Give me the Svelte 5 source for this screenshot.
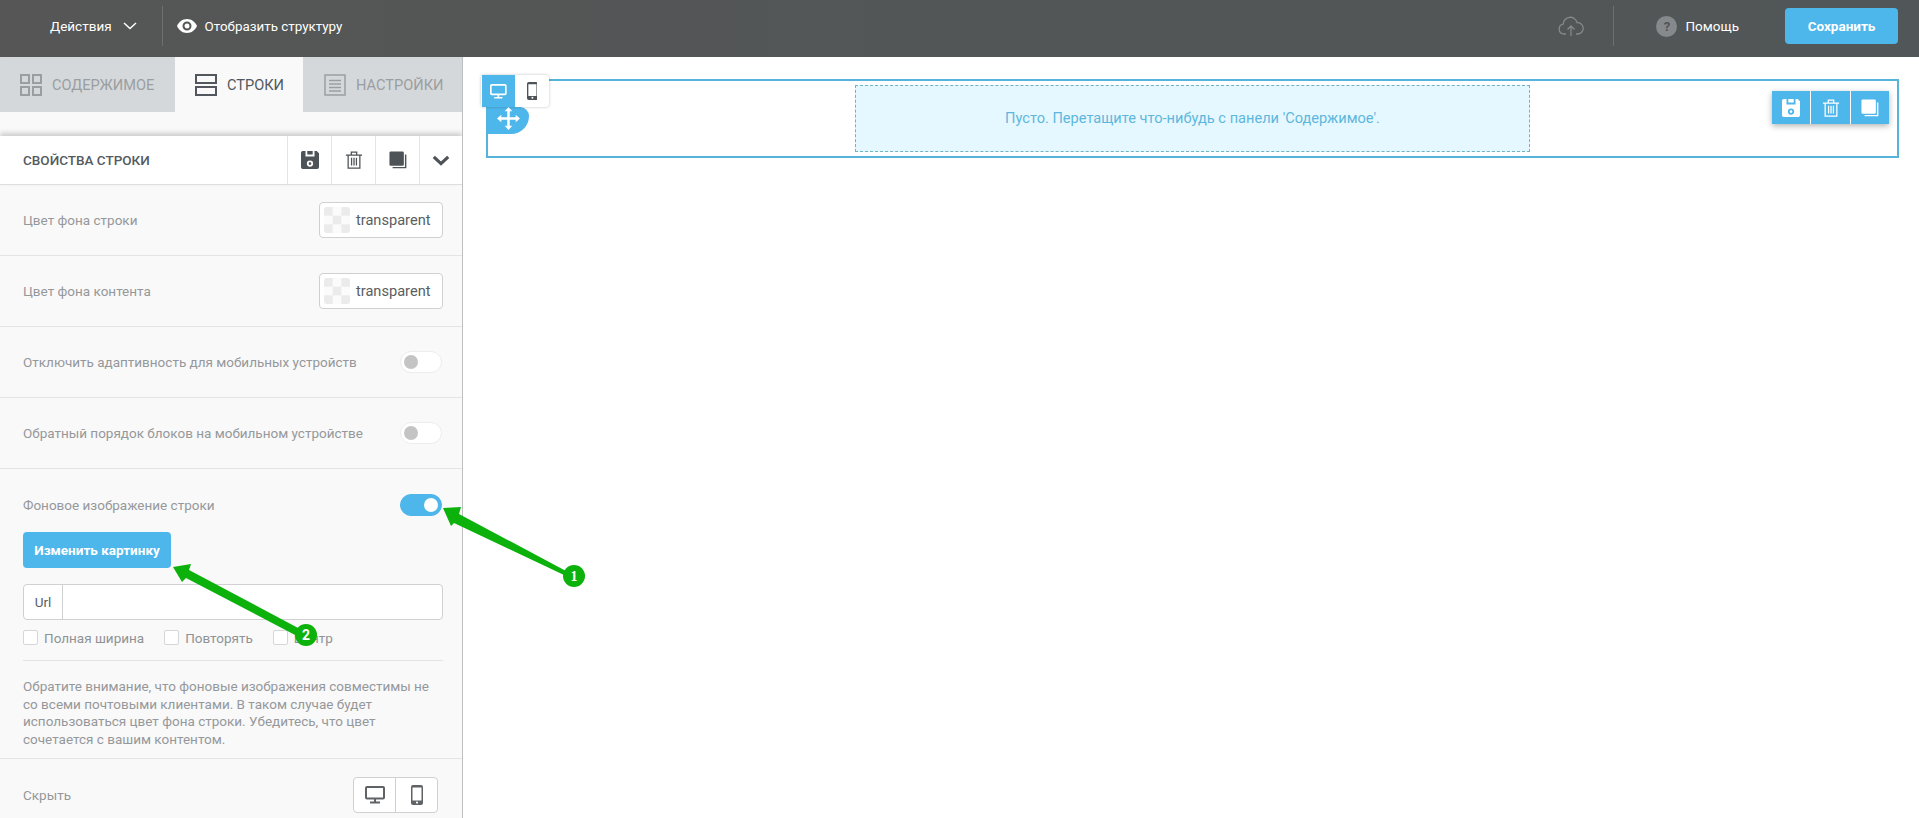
<script>
  const switchRows = [
    'Отключить адаптивность для мобильных устройств',
    'Обратный порядок блоков на мобильном устройстве'
  ];
  const colorRows = ['Цвет фона строки', 'Цвет фона контента'];
  const checks = ['Полная ширина', 'Повторять', 'Центр'];
</script>

{#snippet floppy()}
  <svg viewBox="0 0 20 20" width="18" height="18"><path fill="currentColor" fill-rule="evenodd" d="M2 0h3v6h10V0h2.500L20 2.500V18a2 2 0 0 1-2 2H2a2 2 0 0 1-2-2V2a2 2 0 0 1 2-2zM7 0h6v4H7zM10 10.500a3.500 3.500 0 1 0 0 7 3.500 3.500 0 0 0 0-7zm0 2a1.500 1.500 0 1 1 0 3 1.500 1.500 0 0 1 0-3z"/></svg>
{/snippet}

{#snippet trash()}
  <svg viewBox="0 0 20 20" width="18" height="18" fill="none" stroke="currentColor" stroke-width="1.400"><path d="M1 4.500h18M7 4V1.200h6V4M3.500 4.700V19h13V4.700M7.300 7.500v8.500M10 7.500v8.500M12.700 7.500v8.500"/></svg>
{/snippet}

{#snippet copy()}
  <svg viewBox="0 0 20 20" width="18" height="18"><rect x="0.500" y="0.500" width="16" height="16" rx="1.500" fill="currentColor"/><path d="M18.500 4v14.500H4" fill="none" stroke="currentColor" stroke-width="1.600"/></svg>
{/snippet}

{#snippet monitor()}
  <svg viewBox="0 0 20 18" width="20" height="18" fill="none" stroke="currentColor" stroke-width="2"><rect x="1" y="1" width="18" height="11.500" rx="1"/><path d="M10 13v3M5 16.500h10"/></svg>
{/snippet}

{#snippet phone()}
  <svg viewBox="0 0 12 20" width="12" height="20"><path fill="currentColor" fill-rule="evenodd" d="M2 0h8a2 2 0 0 1 2 2v16a2 2 0 0 1-2 2H2a2 2 0 0 1-2-2V2a2 2 0 0 1 2-2zM1.500 2.500v13h9v-13zM6 16.500a1.100 1.100 0 1 0 0 2.200 1.100 1.100 0 0 0 0-2.200z"/></svg>
{/snippet}

<div class="page">
  <header class="topbar">
    <div class="actions">
      <span>Действия</span>
      <svg viewBox="0 0 14 8" width="14" height="8" fill="none" stroke="currentColor" stroke-width="1.500"><path d="M1 1l6 5.500L13 1"/></svg>
    </div>
    <div class="structure">
      <svg viewBox="0 0 20 14" width="20" height="14"><path fill="currentColor" fill-rule="evenodd" d="M10 0c4.500 0 8.200 2.800 10 7-1.800 4.200-5.500 7-10 7S1.800 11.200 0 7c1.800-4.200 5.500-7 10-7zm0 2.500a4.500 4.500 0 1 0 0 9 4.500 4.500 0 0 0 0-9zm0 2a2.500 2.500 0 1 1 0 5 2.500 2.500 0 0 1 0-5z"/></svg>
      <span>Отобразить структуру</span>
    </div>
    <div class="top-right">
      <svg class="cloud" viewBox="0 0 27 21" width="27" height="21" fill="none" stroke="currentColor" stroke-width="1.300"><path d="M8 18H6a5 5 0 0 1-.8-9.900A7 7 0 0 1 19 6.600a5.700 5.700 0 0 1 1 11.400h-2M13 20V10M9.500 13.500L13 10l3.500 3.500"/></svg>
      <div class="help">
        <span class="help-icon">?</span>
        <span>Помощь</span>
      </div>
      <button class="save">Сохранить</button>
    </div>
  </header>

  <div class="main">
    <aside class="sidebar">
      <nav class="tabs">
        <div class="tab first">
          <svg viewBox="0 0 22 22" width="22" height="22" fill="none" stroke="currentColor" stroke-width="2"><rect x="1" y="1" width="8" height="8"/><rect x="13" y="1" width="8" height="8"/><rect x="1" y="13" width="8" height="8"/><rect x="13" y="13" width="8" height="8"/></svg>
          <span>Содержимое</span>
        </div>
        <div class="tab active">
          <svg viewBox="0 0 22 22" width="22" height="22" fill="none" stroke="currentColor" stroke-width="2"><rect x="1" y="1" width="20" height="8"/><rect x="1" y="13" width="20" height="8"/></svg>
          <span>Строки</span>
        </div>
        <div class="tab last">
          <svg viewBox="0 0 22 22" width="22" height="22" fill="none" stroke="currentColor" stroke-width="1.500"><rect x="1" y="1" width="20" height="20"/><path d="M5 6.500h12M5 10h12M5 13.500h12M5 17h12"/></svg>
          <span>Настройки</span>
        </div>
      </nav>

      <section class="props">
        <div class="props-head">
          <h2>Свойства строки</h2>
          <button class="head-btn">{@render floppy()}</button>
          <button class="head-btn">{@render trash()}</button>
          <button class="head-btn">{@render copy()}</button>
          <button class="head-btn">
            <svg viewBox="0 0 20 12" width="18" height="11" fill="none" stroke="currentColor" stroke-width="3.600"><path d="M2 2l8 7.500L18 2"/></svg>
          </button>
        </div>

        {#each colorRows as label}
          <div class="row">
            <span class="label">{label}</span>
            <div class="color-input">
              <span class="swatch"></span>
              <span>transparent</span>
            </div>
          </div>
        {/each}

        {#each switchRows as label}
          <div class="row">
            <span class="label">{label}</span>
            <span class="switch"></span>
          </div>
        {/each}

        <div class="image-block">
          <div class="image-title">
            <span class="label">Фоновое изображение строки</span>
            <span class="switch on"></span>
          </div>
          <button class="change">Изменить картинку</button>
          <div class="url">
            <span class="url-addon">Url</span>
          </div>
          <div class="checks">
            {#each checks as check}
              <div class="check">
                <span class="box"></span>
                <span>{check}</span>
              </div>
            {/each}
          </div>
          <p class="note">Обратите внимание, что фоновые изображения совместимы не со всеми почтовыми клиентами. В таком случае будет использоваться цвет фона строки. Убедитесь, что цвет сочетается с вашим контентом.</p>
        </div>

        <div class="row hide-row">
          <span class="label">Скрыть</span>
          <div class="hide-group">
            <span class="hide-btn">{@render monitor()}</span>
            <span class="hide-btn">{@render phone()}</span>
          </div>
        </div>
      </section>
    </aside>

    <main class="canvas">
      <div class="device-toggle">
        <span class="device selected">{@render monitor()}</span>
        <span class="device">{@render phone()}</span>
      </div>
      <div class="email-row">
        <span class="move">
          <svg viewBox="0 0 24 24" width="23" height="23"><path fill="#fff" d="M12 0l4 4.500h-2.700v6.200h6.200V8l4.500 4-4.500 4v-2.700h-6.200v6.200H16L12 24l-4-4.500h2.700v-6.200H4.500V16L0 12l4.500-4v2.700h6.200V4.500H8z"/></svg>
        </span>
        <div class="drop">Пусто. Перетащите что-нибудь с панели 'Содержимое'.</div>
        <div class="row-tools">
          <span class="tool">{@render floppy()}</span>
          <span class="tool">{@render trash()}</span>
          <span class="tool">{@render copy()}</span>
        </div>
      </div>
    </main>
  </div>

  <svg class="arrows" viewBox="0 0 1919 818" width="1919" height="818">
    <g fill="#0cb10c">
      <path d="M443 508L461 507 459 514 566 571 564 575 454 523 451 526z"/>
      <path d="M173 567L191 564 189 570 300 629 297 636 186 578 182 582z"/>
      <circle cx="574" cy="576" r="11"/>
      <circle cx="306" cy="635" r="11"/>
    </g>
    <g fill="#fff" font-family="'Liberation Serif', serif" font-size="14" font-weight="700" text-anchor="middle">
      <text x="574" y="581">1</text>
    </g>
    <g fill="#fff" font-family="Roboto, sans-serif" font-size="14" font-weight="700" text-anchor="middle">
      <text x="306" y="640">2</text>
    </g>
  </svg>
</div>

<style>
  :global(body) {
    margin: 0;
    background: #fff;
    overflow: hidden;
  }

  .page {
    position: relative;
    width: 1919px;
    height: 818px;
    overflow: hidden;
    font-family: Roboto, "Liberation Sans", sans-serif;
    font-size: 13.5px;
    color: #8f9396;
  }

  button {
    font-family: inherit;
    border: none;
    cursor: pointer;
  }

  .topbar {
    height: 57px;
    box-sizing: border-box;
    display: flex;
    align-items: center;
    padding: 0 0 5px 50px;
    background: linear-gradient(to right, #555655, #515658);
    color: #fff;
  }

  .actions {
    display: flex;
    align-items: center;
    gap: 11px;
    height: 40px;
    padding-right: 25px;
    border-right: 1px solid #6c7072;
  }

  .structure {
    display: flex;
    align-items: center;
    gap: 8px;
    margin-left: 14px;
    font-size: 13.4px;
  }

  .top-right {
    margin-left: auto;
    display: flex;
    align-items: center;
    padding-right: 21px;
  }

  .cloud {
    color: #85898b;
    margin-right: 28px;
  }

  .help {
    display: flex;
    align-items: center;
    gap: 8px;
    height: 40px;
    padding-left: 42px;
    margin-right: 46px;
    border-left: 1px solid #6c7072;
  }

  .help-icon {
    width: 21px;
    height: 21px;
    border-radius: 50%;
    background: #85898b;
    color: #4f5355;
    font-weight: 700;
    font-size: 13px;
    text-align: center;
    line-height: 21px;
  }

  .save {
    width: 113px;
    height: 36px;
    border-radius: 4px;
    background: #4db6ea;
    color: #fff;
    font-size: 13.5px;
    font-weight: 700;
  }

  .main {
    display: flex;
    height: 761px;
  }

  .sidebar {
    width: 463px;
    flex: none;
    box-sizing: border-box;
    border-right: 1px solid #bdbfc0;
    background: #f9f9f9;
    overflow: hidden;
  }

  .tabs {
    display: flex;
    height: 55px;
    background: #d5d8da;
  }

  .tab {
    display: flex;
    align-items: center;
    gap: 10px;
    padding-left: 20px;
    color: #9a9ea1;
    font-size: 14.6px;
    text-transform: uppercase;
  }

  .tab.first {
    width: 175px;
    box-sizing: border-box;
  }

  .tab.active {
    width: 128px;
    box-sizing: border-box;
    background: #f9f9f9;
    color: #51575c;
  }

  .tab.last {
    flex: 1;
    padding-left: 21px;
  }

  .props {
    margin-top: 24px;
  }

  .props-head {
    height: 48px;
    display: flex;
    align-items: stretch;
    background: #fff;
    border-bottom: 1px solid #dcdedf;
    box-shadow: 0 -3px 5px rgba(0, 0, 0, 0.18);
    padding-left: 23px;
  }

  .props-head h2 {
    flex: 1;
    margin: 0;
    align-self: center;
    font-size: 13.5px;
    font-weight: 500;
    text-transform: uppercase;
    color: #555a5e;
  }

  .head-btn {
    width: 44px;
    padding: 0;
    display: flex;
    align-items: center;
    justify-content: center;
    background: none;
    border-left: 1px solid #e3e4e5;
    color: #4d5357;
  }

  .head-btn:last-child {
    width: 43px;
  }

  .row {
    height: 71px;
    box-sizing: border-box;
    display: flex;
    align-items: center;
    justify-content: space-between;
    padding: 0 19px 0 23px;
    border-bottom: 1px solid #e3e4e5;
  }

  .label {
    color: #95989b;
  }

  .color-input {
    width: 124px;
    height: 36px;
    box-sizing: border-box;
    display: flex;
    align-items: center;
    gap: 6px;
    padding-left: 4px;
    background: #fff;
    border: 1px solid #ced0d2;
    border-radius: 4px;
    color: #5a5e62;
    font-size: 14.6px;
  }

  .swatch {
    width: 26px;
    height: 26px;
    border-radius: 3px;
    background: conic-gradient(#ebebeb 25%, #fbfbfb 0 50%, #ebebeb 0 75%, #fbfbfb 0) -8.67px 0 / 17.33px 17.33px;
  }

  .switch {
    position: relative;
    width: 42px;
    height: 22px;
    box-sizing: border-box;
    margin-right: 1px;
    border: 1px solid #ededed;
    border-radius: 11px;
    background: #fff;
  }

  .switch::after {
    content: "";
    position: absolute;
    left: 3px;
    top: 3px;
    width: 14px;
    height: 14px;
    border-radius: 50%;
    background: #c4c4c4;
  }

  .switch.on {
    background: #4db6ea;
    border-color: #4db6ea;
  }

  .switch.on::after {
    left: auto;
    right: 3px;
    background: #fff;
  }

  .image-block {
    box-sizing: border-box;
    height: 290px;
    padding: 25px 19px 0 23px;
    border-bottom: 1px solid #e3e4e5;
  }

  .image-title {
    display: flex;
    align-items: center;
    justify-content: space-between;
    height: 22px;
  }

  .change {
    display: block;
    margin-top: 16px;
    width: 148px;
    height: 36px;
    padding: 0;
    border-radius: 4px;
    background: #4db6ea;
    color: #fff;
    font-size: 13.5px;
    font-weight: 700;
  }

  .url {
    margin-top: 16px;
    height: 36px;
    box-sizing: border-box;
    display: flex;
    background: #fff;
    border: 1px solid #ced0d2;
    border-radius: 4px;
  }

  .url-addon {
    width: 39px;
    box-sizing: border-box;
    border-right: 1px solid #ced0d2;
    text-align: center;
    line-height: 34px;
    color: #5a5e62;
    font-size: 13.5px;
  }

  .checks {
    display: flex;
    gap: 20px;
    height: 41px;
    padding-top: 10px;
    box-sizing: border-box;
    border-bottom: 1px solid #e3e4e5;
  }

  .check {
    display: flex;
    align-items: flex-start;
    gap: 6px;
    line-height: 16px;
  }

  .box {
    width: 15px;
    height: 15px;
    box-sizing: border-box;
    background: #fff;
    border: 1px solid #d5d6d7;
    border-radius: 2px;
  }

  .note {
    margin: 17px 0 0;
    line-height: 17.5px;
    color: #95989b;
  }

  .hide-row {
    border-bottom: none;
  }

  .hide-group {
    display: flex;
    margin-right: 5px;
    background: #fff;
    border: 1px solid #ced0d2;
    border-radius: 4px;
  }

  .hide-btn {
    width: 41px;
    height: 34px;
    display: flex;
    align-items: center;
    justify-content: center;
    color: #5f6366;
  }

  .hide-btn + .hide-btn {
    border-left: 1px solid #ced0d2;
  }

  .canvas {
    position: relative;
    flex: 1;
    padding: 22px 20px 0 23px;
  }

  .device-toggle {
    position: absolute;
    left: 18px;
    top: 18px;
    z-index: 2;
    display: flex;
    height: 32px;
    background: #fff;
    border-radius: 3px;
    box-shadow: 0 0 3px rgba(0, 0, 0, 0.25);
  }

  .device {
    width: 34px;
    display: flex;
    align-items: center;
    justify-content: center;
    color: #4d5357;
  }

  .device :global(svg) {
    width: auto;
    height: 15px;
  }

  .device + .device :global(svg) {
    height: 18px;
  }

  .device.selected {
    margin-left: 1px;
    width: 33px;
    background: #4db6ea;
    color: #fff;
  }

  .email-row {
    position: relative;
    height: 79px;
    box-sizing: border-box;
    border: 2px solid #56b3da;
    display: flex;
    justify-content: center;
    padding-top: 4px;
  }

  .move {
    position: absolute;
    left: 0;
    top: 26px;
    width: 41px;
    height: 27px;
    display: flex;
    align-items: flex-start;
    justify-content: center;
    background: #4db6ea;
    border-radius: 0 10px 20px 0;
  }

  .drop {
    width: 675px;
    height: 67px;
    box-sizing: border-box;
    border: 1px dashed #6db4c4;
    background: #e6f8ff;
    color: #5db7dc;
    font-size: 14.6px;
    text-align: center;
    line-height: 65px;
  }

  .row-tools {
    position: absolute;
    right: 8px;
    top: 10px;
    display: flex;
    gap: 1px;
    box-shadow: 0 2px 6px rgba(0, 0, 0, 0.3);
    background: #fff;
  }

  .tool {
    width: 38.300px;
    height: 33px;
    display: flex;
    align-items: center;
    justify-content: center;
    background: #4db6ea;
    color: #fff;
  }

  .arrows {
    position: absolute;
    left: 0;
    top: 0;
    pointer-events: none;
  }
</style>
